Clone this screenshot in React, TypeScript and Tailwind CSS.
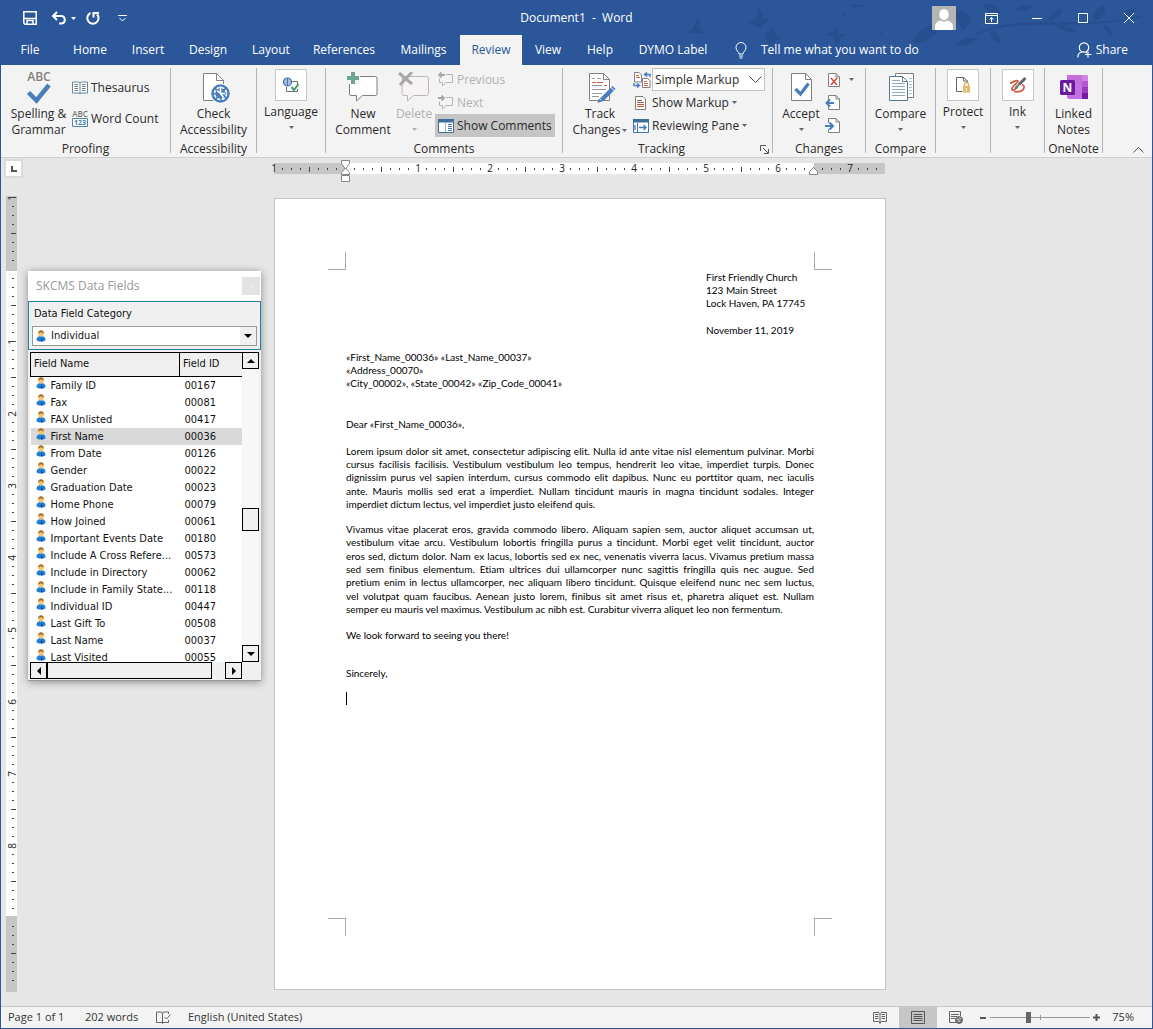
import React, { useState } from 'react';

interface Field {
  name: string;
  id: string;
}

const TABS = [
  { label: 'File', width: 'w-[58px]' },
  { label: 'Home', width: 'w-[62px]' },
  { label: 'Insert', width: 'w-[54px]' },
  { label: 'Design', width: 'w-[66px]' },
  { label: 'Layout', width: 'w-[60px]' },
  { label: 'References', width: 'w-[86px]' },
  { label: 'Mailings', width: 'w-[73px]' },
  { label: 'Review', width: 'w-[62px]' },
  { label: 'View', width: 'w-[52px]' },
  { label: 'Help', width: 'w-[52px]' },
  { label: 'DYMO Label', width: 'w-[94px]' },
];

const FIELDS: Field[] = [
  { name: 'Family ID', id: '00167' },
  { name: 'Fax', id: '00081' },
  { name: 'FAX Unlisted', id: '00417' },
  { name: 'First Name', id: '00036' },
  { name: 'From Date', id: '00126' },
  { name: 'Gender', id: '00022' },
  { name: 'Graduation Date', id: '00023' },
  { name: 'Home Phone', id: '00079' },
  { name: 'How Joined', id: '00061' },
  { name: 'Important Events Date', id: '00180' },
  { name: 'Include A Cross Refere...', id: '00573' },
  { name: 'Include in Directory', id: '00062' },
  { name: 'Include in Family State...', id: '00118' },
  { name: 'Individual ID', id: '00447' },
  { name: 'Last Gift To', id: '00508' },
  { name: 'Last Name', id: '00037' },
  { name: 'Last Visited', id: '00055' },
];

const FIRST_PARAGRAPH = [
  'Lorem ipsum dolor sit amet, consectetur adipiscing elit. Nulla id ante vitae nisl elementum pulvinar. Morbi',
  'cursus facilisis facilisis. Vestibulum vestibulum leo tempus, hendrerit leo vitae, imperdiet turpis. Donec',
  'dignissim purus vel sapien interdum, cursus commodo elit dapibus. Nunc eu porttitor quam, nec iaculis',
  'ante. Mauris mollis sed erat a imperdiet. Nullam tincidunt mauris in magna tincidunt sodales. Integer',
  'imperdiet dictum lectus, vel imperdiet justo eleifend quis.',
];

const SECOND_PARAGRAPH = [
  'Vivamus vitae placerat eros, gravida commodo libero. Aliquam sapien sem, auctor aliquet accumsan ut,',
  'vestibulum vitae arcu. Vestibulum lobortis fringilla purus a tincidunt. Morbi eget velit tincidunt, auctor',
  'eros sed, dictum dolor. Nam ex lacus, lobortis sed ex nec, venenatis viverra lacus. Vivamus pretium massa',
  'sed sem finibus elementum. Etiam ultrices dui ullamcorper nunc sagittis fringilla quis nec augue. Sed',
  'pretium enim in lectus ullamcorper, nec aliquam libero tincidunt. Quisque eleifend nunc nec sem luctus,',
  'vel volutpat quam faucibus. Aenean justo lorem, finibus sit amet risus et, pharetra aliquet est. Nullam',
  'semper eu mauris vel maximus. Vestibulum ac nibh est. Curabitur viverra aliquet leo non fermentum.',
];

/* ---------- icons ---------- */

const Caret: React.FC<{ className?: string }> = ({ className = 'text-[#666]' }) => (
  <svg width="5" height="3" viewBox="0 0 5 3" className={`shrink-0 ${className}`}>
    <path d="M0 0h5L2.5 3z" fill="currentColor" />
  </svg>
);

const SpellingIcon = () => (
  <svg width="32" height="32" viewBox="0 0 32 32" className="overflow-visible font-['Open_Sans',sans-serif]">
    <text x="16" y="9" textAnchor="middle" fontSize="12" fontWeight="600" fill="#808080">ABC</text>
    <path d="M5.500 20.500l8 8L26 13" fill="none" stroke="#4a7ebb" strokeWidth="4.500" />
  </svg>
);

const ThesaurusIcon = () => (
  <svg width="16" height="14" viewBox="0 0 16 14">
    <path d="M.5 1h6.500l1 1 1-1h6.500v11H9l-1 1-1-1H.5z" fill="#fff" stroke="#5f8aa5" />
    <path d="M8 2v11" stroke="#5f8aa5" />
    <path d="M2.500 3.500H6M2.500 5.500H6M2.500 7.500H6M2.500 9.500H6M10 3.500h3.500M10 5.500h3.500M10 7.500h3.500M10 9.500h3.500" stroke="#777" />
  </svg>
);

const WordCountIcon = () => (
  <svg width="16" height="16" viewBox="0 0 16 16" className="overflow-visible font-['Open_Sans',sans-serif]">
    <text x="8" y="6" textAnchor="middle" fontSize="8" fontWeight="600" fill="#777">ABC</text>
    <path d="M.5 7.500h15v8H.5z" fill="#fff" stroke="#4a86ad" />
    <text x="8" y="14" textAnchor="middle" fontSize="7" fontWeight="700" fill="#3f7ca6">123</text>
  </svg>
);

const AccessibilityIcon = () => (
  <svg width="32" height="32" viewBox="0 0 32 32">
    <path d="M5.500 1.500h13l7 7v20h-20z" fill="#fff" stroke="#808080" />
    <path d="M18.500 1.500v7h7" fill="none" stroke="#808080" />
    <circle cx="22.500" cy="21.500" r="10" fill="#fff" />
    <circle cx="22.500" cy="21.500" r="9.300" fill="#4a7ebb" />
    <circle cx="22.500" cy="21.500" r="6" fill="none" stroke="#fff" strokeWidth="1.600" strokeDasharray="3.100 1.610" />
    <path d="M22.500 14.500v7l3 4M22.500 21.500h4.500M22.500 21.500l-3.500-3" stroke="#fff" strokeWidth="1.600" fill="none" />
  </svg>
);

const LanguageIcon = () => (
  <svg width="16" height="16" viewBox="0 0 16 16">
    <path d="M3.500 10v4.500h11V12M9 4.500h5.500V7" fill="none" stroke="#707070" />
    <circle cx="4.500" cy="5" r="4" fill="#fff" stroke="#3f6fa8" strokeWidth="1.200" />
    <path d="M.5 5h8M4.500 1v8M1.500 3h6M1.500 7h6" stroke="#3f6fa8" strokeWidth=".9" />
    <path d="M8.500 10l2.500 3 4.500-6" fill="none" stroke="#4a9a6b" strokeWidth="2" />
  </svg>
);

const NewCommentIcon = () => (
  <svg width="32" height="32" viewBox="0 0 32 32">
    <path d="M2.500 4.500h26a1.500 1.500 0 0 1 1.500 1.500v16a1.500 1.500 0 0 1-1.500 1.500H15.500l-6 5.500v-5.500H4A1.500 1.500 0 0 1 2.500 22z" fill="#fff" stroke="#808080" />
    <path d="M0 0h13v12H0z" fill="#f3f3f3" />
    <path d="M6 0v12M0 6h12" stroke="#6aa58c" strokeWidth="4" />
  </svg>
);

const DeleteCommentIcon = () => (
  <svg width="32" height="32" viewBox="0 0 32 32">
    <path d="M4.500 4.500h24a2 2 0 0 1 2 2v15a2 2 0 0 1-2 2h-13l-6 5.500v-5.500H6a2 2 0 0 1-2-2z" fill="#f6f2f6" stroke="#b9b5b9" />
    <path d="M1 1l13 11M14 0L2 13" stroke="#a8a8a8" strokeWidth="3" />
  </svg>
);

const CommentNavIcon: React.FC<{ next?: boolean }> = ({ next }) => (
  <svg width="16" height="16" viewBox="0 0 16 16">
    <path d="M8 2.500h6.500v8H8L4.500 14v-3.500h-3v-4" fill="none" stroke="#b5b5b5" />
    {next ? (
      <path d="M0 3h6M3.500.5L6 3 3.500 5.500" fill="none" stroke="#a8a8a8" strokeWidth="1.800" />
    ) : (
      <path d="M1 3h6M3.500.5L1 3l2.500 2.500" fill="none" stroke="#a8a8a8" strokeWidth="1.800" />
    )}
  </svg>
);

const ShowCommentsIcon = () => (
  <svg width="16" height="14" viewBox="0 0 16 14">
    <path d="M.5.5h15v13H.5z" fill="#fff" stroke="#3e6d96" />
    <path d="M0 0h16v3.500H0z" fill="#3e6d96" />
    <path d="M7.500 4v9" stroke="#9ab3c8" />
    <path d="M10 5.500h4M10 7.500h4M10 9.500h4M10 11.500h4" stroke="#3e79b5" />
  </svg>
);

const TrackChangesIcon = () => (
  <svg width="32" height="32" viewBox="0 0 32 32">
    <path d="M5.500 1.500h14l6 6v21h-20z" fill="#fff" stroke="#808080" />
    <path d="M19.500 1.500v6h6" fill="none" stroke="#808080" />
    <path d="M8 6.500h3M13 6.500h4M8 13.500h10M8 17.500h14M8 21.500h10M8 24.500h7" stroke="#999" />
    <path d="M8 10.500h4M13 10.500h6M20 13.500h3" stroke="#c65f4a" strokeWidth="1.200" />
    <path d="M30 15.500L17.500 28" stroke="#4a7ebb" strokeWidth="4.500" />
    <path d="M15 26.500L13.500 31l4.500-1.500z" fill="#4a7ebb" />
    <path d="M26.500 15l4 4" stroke="#fff" />
  </svg>
);

const MarkupIcon = () => (
  <svg width="18" height="16" viewBox="0 0 18 16">
    <path d="M1.500.5H6L8.500 3v7h-7zM9.500 6.500h5l2.500 2v7H9.500z" fill="#fff" stroke="#808080" />
    <path d="M3 3.500h3M3 5.500h4M11 9.500h3M11 11.500h4M11 13.500h4" stroke="#c65f4a" />
    <path d="M17 5V2.500h-5M14 .5l-2.500 2 2.500 2M1 11v2.500h5M4 11.500l2.500 2L4 15.500" fill="none" stroke="#4a7ebb" strokeWidth="1.400" />
  </svg>
);

const ShowMarkupIcon = () => (
  <svg width="16" height="16" viewBox="0 0 16 16">
    <path d="M2.500 1.500H10L12.500 4v10.500h-10z" fill="#fff" stroke="#808080" />
    <path d="M4 5.500h5M4 7.500h7M4 9.500h7M4 11.500h7" stroke="#b5564a" />
  </svg>
);

const ReviewingPaneIcon = () => (
  <svg width="16" height="14" viewBox="0 0 16 14">
    <path d="M.5.5h15v13H.5z" fill="#fff" stroke="#3e79b5" />
    <path d="M0 0h16v3.500H0z" fill="#3e6d96" />
    <path d="M4.500 4v9" stroke="#3e79b5" />
    <path d="M6 8.500h7M10.500 6l2.500 2.500-2.500 2.500M2 6v5" fill="none" stroke="#3e79b5" strokeWidth="1.300" />
  </svg>
);

const AcceptIcon = () => (
  <svg width="32" height="32" viewBox="0 0 32 32">
    <path d="M6.500 1.500h14l6 6v21h-20z" fill="#fff" stroke="#808080" />
    <path d="M20.500 1.500v6h6" fill="none" stroke="#808080" />
    <path d="M10.500 17l5 5 8-10.500" fill="none" stroke="#4a7ebb" strokeWidth="3.200" />
  </svg>
);

const RejectIcon = () => (
  <svg width="14" height="16" viewBox="0 0 14 16">
    <path d="M1.500 1.500H9L12.500 5v9.500h-11zM9 1.500V5h3.500" fill="#fff" stroke="#808080" />
    <path d="M4 6l6 7M10 6l-6 7" stroke="#d04a35" strokeWidth="1.500" />
  </svg>
);

const ChangeNavIcon: React.FC<{ next?: boolean }> = ({ next }) => (
  <svg width="16" height="16" viewBox="0 0 16 16">
    <path d="M3.500 5V.5H11l3.500 3.500v10.500h-11V11" fill="#fff" stroke="#808080" />
    <path d="M11 .5V4h3.500" fill="none" stroke="#808080" />
    {next ? (
      <path d="M0 8h7.500M4.500 4.500L8 8l-3.500 3.500" fill="none" stroke="#4a7ebb" strokeWidth="2" />
    ) : (
      <path d="M1 8h8M5 4.500L1.500 8 5 11.500" fill="none" stroke="#4a7ebb" strokeWidth="2" />
    )}
  </svg>
);

const CompareIcon = () => (
  <svg width="32" height="32" viewBox="0 0 32 32">
    <path d="M10.500 1.500h18v24h-18z" fill="#fff" stroke="#808080" />
    <path d="M24 6.500h3M24 9.500h3M24 12.500h3M24 15.500h3M24 18.500h3M24 21.500h3" stroke="#a9bfd2" />
    <path d="M4.500 4.500h13l5 5v19h-18z" fill="#fff" stroke="#557b9c" />
    <path d="M17.500 4.500v5h5" fill="none" stroke="#557b9c" />
    <path d="M7 8.500h8M7 11.500h13M7 14.500h13M7 17.500h13M7 20.500h13M7 23.500h13" stroke="#8fa9c0" />
  </svg>
);

const ProtectIcon = () => (
  <svg width="16" height="16" viewBox="0 0 16 16">
    <path d="M7.500 14.500h-6V.5h7L12.500 4v2M8.500.5V4h4" fill="none" stroke="#666" />
    <path d="M9.500 9V7.500a2 2 0 0 1 4 0V9" fill="none" stroke="#d9b466" strokeWidth="1.400" />
    <path d="M8 9h7v6.500H8z" fill="#e3bb69" />
    <path d="M11.500 11v2.500" stroke="#fff" />
  </svg>
);

const InkIcon = () => (
  <svg width="18" height="16" viewBox="0 0 18 16">
    <path d="M1 6.500c3-2 7-3.500 8-2.500C10 5.500 2 9 3 12.500c1 2 4-1 6-2.500M5 14.500c4 1 9 0 10-3.500.4-2-.5-3-2-3.500" fill="none" stroke="#d0573f" strokeWidth="1.700" />
    <path d="M16.500 1L10 7.500" stroke="#666" strokeWidth="3" />
    <path d="M10 7.500L6 11.500" stroke="#777" strokeWidth="2" />
  </svg>
);

const OneNoteIcon = () => (
  <svg width="32" height="32" viewBox="0 0 32 32">
    <path d="M9 3h19a2 2 0 0 1 2 2v22H11a2 2 0 0 1-2-2z" fill="#c56ee0" />
    <path d="M24 3h4a2 2 0 0 1 2 2v4h-6z" fill="#cf86e6" />
    <path d="M24 9h6v6h-6z" fill="#b557d6" />
    <path d="M24 15h6v6h-6z" fill="#9a3cc2" />
    <path d="M24 21h6v6h-6z" fill="#7719aa" />
    <rect x="2" y="8" width="15" height="15" rx="1.500" fill="#6b1a9c" />
    <text x="9.500" y="20" textAnchor="middle" fontSize="12" fontWeight="700" fill="#fff" className="font-['Open_Sans',sans-serif]">N</text>
  </svg>
);

const PersonIcon = () => (
  <svg width="10" height="12" viewBox="0 0 10 12" className="shrink-0">
    <path d="M.5 9.500C.5 7.500 2 6.500 3.500 6.300h3C8 6.500 9.500 7.500 9.500 9.500c0 1.500-1.500 2-4.500 2s-4.500-.5-4.500-2z" fill="#1f80d8" />
    <path d="M5 7.500l2 3.500-2 .5z" fill="#123f7a" />
    <circle cx="5" cy="4" r="2.600" fill="#f5c46b" />
    <path d="M2.200 4C1.800 1.500 3.200.3 5 .3s3.200 1.200 2.800 3.700C7 2.800 6.500 2.500 5 2.500S3 2.800 2.200 4z" fill="#a86a1c" />
  </svg>
);

// faint birds and branches woven into the title bar
const TitleArt = () => (
  <svg width="480" height="64" viewBox="0 0 480 64" className="pointer-events-none absolute right-0 top-0" fill="#274f8f">
    <path d="M14 30c5 0 7-2 8-5l3-9c3 4 4 8 3 12l6 4c-7 1-14 1-20-2z" />
    <path d="M76 21c5-1 8-3 8-6l3-9c4 5 4 9 3 12 4-1 7 0 8 2-4 1-7 3-9 7-3-1-8-3-13-6zM92 31c5 1 6-1 8-5 3 3 4 6 3 9l7 3c-3 1-6 1-8 3l-2 5c-4-3-7-9-8-15z" />
    <path d="M155 33c5 0 7-2 9-7 3 2 4 4 3 7 4-1 7 0 8 1l-6 3-3 8c-4-3-4-5-4-8z" />
    <path d="M168 15l5-3v4zM177 3c4 2 8 0 12 1l5-2-5 4c-4 0-9 1-12-3zM205 30l4-1 1 5-3-1z" />
    <path d="M240 42c4-10 12-17 28-20-2 12-10 20-28 20zM284 45c4-7 12-9 22-8-5 6-12 9-22 8zM272 14c8-6 22-6 27 2-1 8-5 13-10 14 1-8-6-12-17-16z" />
    <path d="M294 38c24-16 52-17 82-17 34 0 62 1 94-7v2c-30 7-60 8-94 8-30 0-56 1-82 14z" />
    <path d="M312 4c8-3 14 0 17 9-8 1-14-2-17-9zM342 8c8-5 14-5 20-3-5 5-12 7-20 3zM376 20c2-8 8-12 13-12 1 6-4 11-13 12zM384 25c8-2 17 0 21 6-8 1-16-1-21-6zM422 20c-2-8 3-14 11-16 2 8-3 14-11 16zM432 24c6 1 9 5 9 12-6-2-9-6-9-12zM452 17c1-7 5-10 12-10-1 6-5 9-12 10zM318 30c7 1 11 5 11 12-7-1-11-5-11-12z" />
  </svg>
);

/* ---------- ribbon pieces ---------- */

interface BigButtonProps {
  icon: React.ReactNode;
  lines: string[];
  caret?: boolean;
  inlineCaret?: boolean;
  disabled?: boolean;
  width: string;
}

const BigButton: React.FC<BigButtonProps> = ({ icon, lines, caret, inlineCaret, disabled, width }) => (
  <button disabled={disabled} className={`flex flex-col items-center pt-1 ${width} ${disabled ? 'text-[#b1b1b1]' : ''}`}>
    <span className="mb-[2px]">{icon}</span>
    {lines.map((line, i) => (
      <span key={line} className="flex items-center gap-[2px] whitespace-nowrap leading-4">
        {line}
        {inlineCaret && i === lines.length - 1 && <Caret />}
      </span>
    ))}
    {caret && <Caret className={disabled ? 'mt-[6px] text-[#b1b1b1]' : 'mt-[6px] text-[#666]'} />}
  </button>
);

// collapsed group: boxed icon with a menu arrow under its name
const BoxButton: React.FC<{ icon: React.ReactNode; label: string }> = ({ icon, label }) => (
  <button className="flex w-full flex-col items-center pt-px">
    <span className="flex size-8 items-center justify-center border border-[#c8c8c8] bg-white">{icon}</span>
    <span className="mt-[3px] leading-4">{label}</span>
    <Caret className="mt-[6px] text-[#666]" />
  </button>
);

const SmallButton: React.FC<{ icon: React.ReactNode; label: string; caret?: boolean; disabled?: boolean }> = ({ icon, label, caret, disabled }) => (
  <button disabled={disabled} className={`flex h-[23px] items-center gap-[3px] whitespace-nowrap ${disabled ? 'text-[#b1b1b1]' : ''}`}>
    {icon}
    {label}
    {caret && <Caret />}
  </button>
);

const Group: React.FC<{ label?: string; width: string; launcher?: boolean; children: React.ReactNode }> = ({ label, width, launcher, children }) => (
  <>
    <section aria-label={label} className={`flex shrink-0 flex-col ${width}`}>
      <div className="flex flex-1 pt-[3px]">{children}</div>
      {label && (
        <div className="flex h-4 items-center justify-center">
          <span className={launcher ? 'flex-1 text-center' : ''}>{label}</span>
          {launcher && (
            <button aria-label={`${label} options`} className="mr-[3px]">
              <svg width="9" height="9" viewBox="0 0 9 9" fill="none" stroke="#555">
                <path d="M.5 6V.5H6M3 3l5 5M8.500 4v4.500H4" />
              </svg>
            </button>
          )}
        </div>
      )}
    </section>
    <div className="mb-1 mt-[3px] w-px shrink-0 bg-[#b5b5b5]" />
  </>
);

const Ribbon = () => (
  <div className="flex h-[93px] border-b border-[#cfcfcf] bg-[#f3f3f3] text-[#2a2a2a]">
    <Group label="Proofing" width="w-[169px]">
      <BigButton icon={<SpellingIcon />} lines={['Spelling &', 'Grammar']} width="w-[71px] pl-1" />
      <div className="flex flex-col gap-2 pt-2">
        <SmallButton icon={<ThesaurusIcon />} label="Thesaurus" />
        <SmallButton icon={<WordCountIcon />} label="Word Count" />
      </div>
    </Group>
    <Group label="Accessibility" width="w-[85px]">
      <BigButton icon={<AccessibilityIcon />} lines={['Check', 'Accessibility']} width="w-full" />
    </Group>
    <Group width="w-[68px]">
      <BoxButton icon={<LanguageIcon />} label="Language" />
    </Group>
    <Group label="Comments" width="w-[236px]">
      <BigButton icon={<NewCommentIcon />} lines={['New', 'Comment']} width="w-[74px]" />
      <BigButton icon={<DeleteCommentIcon />} lines={['Delete']} width="w-[28px]" caret disabled />
      <div className="ml-[7px] flex flex-col items-start">
        <div className="pl-[3px]">
          <SmallButton icon={<CommentNavIcon />} label="Previous" disabled />
          <SmallButton icon={<CommentNavIcon next />} label="Next" disabled />
        </div>
        <div className="w-[120px] bg-[#c5c5c5] pl-[3px]">
          <SmallButton icon={<ShowCommentsIcon />} label="Show Comments" />
        </div>
      </div>
    </Group>
    <Group label="Tracking" width="w-[209px]" launcher>
      <BigButton icon={<TrackChangesIcon />} lines={['Track', 'Changes']} width="w-[70px] pl-1" inlineCaret />
      <div className="flex flex-col items-start">
        <div className="flex h-[23px] items-center gap-px">
          <MarkupIcon />
          <div className="relative">
            <select aria-label="Display for review" className="h-[23px] w-[113px] appearance-none border border-[#c3c3c3] bg-white pl-[2px]">
              <option>Simple Markup</option>
            </select>
            <svg width="13" height="8" viewBox="0 0 13 8" className="pointer-events-none absolute right-[3px] top-2" fill="none" stroke="#444">
              <path d="M.5.5l6 6 6-6" />
            </svg>
          </div>
        </div>
        <SmallButton icon={<ShowMarkupIcon />} label="Show Markup" caret />
        <SmallButton icon={<ReviewingPaneIcon />} label="Reviewing Pane" caret />
      </div>
    </Group>
    <Group label="Changes" width="w-[92px]">
      <BigButton icon={<AcceptIcon />} lines={['Accept']} width="w-[52px] pl-1" caret />
      <div className="flex flex-col items-start">
        <button aria-label="Reject" className="flex h-[23px] items-center gap-2">
          <span className="ml-[2px]">
            <RejectIcon />
          </span>
          <Caret />
        </button>
        <button aria-label="Previous change" className="flex h-[23px] items-center">
          <ChangeNavIcon />
        </button>
        <button aria-label="Next change" className="flex h-[23px] items-center">
          <ChangeNavIcon next />
        </button>
      </div>
    </Group>
    <Group label="Compare" width="w-[69px]">
      <BigButton icon={<CompareIcon />} lines={['Compare']} width="w-full" caret />
    </Group>
    <Group width="w-[54px]">
      <BoxButton icon={<ProtectIcon />} label="Protect" />
    </Group>
    <Group width="w-[53px]">
      <BoxButton icon={<InkIcon />} label="Ink" />
    </Group>
    <Group label="OneNote" width="w-[57px]">
      <BigButton icon={<OneNoteIcon />} lines={['Linked', 'Notes']} width="w-full" />
    </Group>
    <button aria-label="Collapse the ribbon" className="mb-1 ml-auto mr-2 self-end">
      <svg width="11" height="6" viewBox="0 0 11 6" fill="none" stroke="#555">
        <path d="M.5 5.500l5-5 5 5" />
      </svg>
    </button>
  </div>
);

/* ---------- title bar and tabs ---------- */

const Header = () => {
  const [active, setActive] = useState('Review');

  return (
    <header className="relative bg-[#2b579a] text-white">
      <TitleArt />
      <div className="relative grid h-[34px] grid-cols-[1fr_auto_1fr] items-center">
        <div className="flex items-center pl-[22px]">
          <button aria-label="Save">
            <svg width="14" height="14" viewBox="0 0 14 14" fill="none" stroke="#fff" strokeWidth="1.500">
              <path d="M.8.800h12.400v12.400H2L.8 12zM1 7.500h12M4 13v-3.500h6V13" />
            </svg>
          </button>
          <button aria-label="Undo" className="ml-[14px] flex items-center gap-1">
            <svg width="16" height="14" viewBox="0 0 16 14" fill="none" stroke="#fff" strokeWidth="2">
              <path d="M6 1L2 5l4 4M2.500 5H10c5 0 5 7.500 0 7.500H8" />
            </svg>
            <Caret className="text-white" />
          </button>
          <button aria-label="Redo" className="ml-[10px]">
            <svg width="14" height="14" viewBox="0 0 14 14" fill="none" stroke="#fff" strokeWidth="2">
              <path d="M4.500 2A5.600 5.600 0 1 0 11 3.200M7.500 6.500V2H13" />
            </svg>
          </button>
          <button aria-label="Customize Quick Access Toolbar" className="ml-[18px]">
            <svg width="9" height="7" viewBox="0 0 9 7" fill="none" stroke="#fff">
              <path d="M0 .5h9M1.500 3l3 3 3-3" />
            </svg>
          </button>
        </div>
        <h1>Document1&nbsp; -&nbsp; Word</h1>
        <div className="flex items-center justify-end">
          <button aria-label="Account" className="mr-3 size-6 bg-[#b5b5b5]">
            <svg width="24" height="24" viewBox="0 0 24 24" fill="#fff">
              <ellipse cx="12" cy="8.500" rx="4.700" ry="5.500" />
              <path d="M3 24v-3c0-4 2.500-6 6-6.500 1.500 1.500 4.500 1.500 6 0 3.500.5 6 2.500 6 6.500v3z" />
            </svg>
          </button>
          <button aria-label="Ribbon display options" className="flex w-[46px] justify-center">
            <svg width="13" height="11" viewBox="0 0 13 11" fill="none" stroke="#fff">
              <path d="M.5.5h12v10H.5zM.5 2.500h12M6.500 9V4.500M4.500 6.500l2-2 2 2" />
            </svg>
          </button>
          <button aria-label="Minimize" className="flex w-[46px] justify-center">
            <svg width="10" height="1" viewBox="0 0 10 1">
              <path d="M0 0h10v1H0z" fill="#fff" />
            </svg>
          </button>
          <button aria-label="Maximize" className="flex w-[46px] justify-center">
            <svg width="10" height="10" viewBox="0 0 10 10" fill="none" stroke="#fff">
              <path d="M.5.5h9v9h-9z" />
            </svg>
          </button>
          <button aria-label="Close" className="flex w-[46px] justify-center">
            <svg width="10" height="10" viewBox="0 0 10 10" stroke="#fff">
              <path d="M0 0l10 10M10 0L0 10" />
            </svg>
          </button>
        </div>
      </div>
      <nav className="relative flex h-[30px]">
        {TABS.map(tab => (
          <button
            key={tab.label}
            onClick={() => setActive(tab.label)}
            className={`shrink-0 whitespace-nowrap ${tab.width} ${active === tab.label ? 'bg-[#f3f3f3] text-[#2b579a]' : ''}`}
          >
            {tab.label}
          </button>
        ))}
        <button className="ml-[15px] flex items-center gap-[14px] whitespace-nowrap">
          <svg width="12" height="17" viewBox="0 0 12 17" fill="none" stroke="#fff">
            <path d="M4 12C4 9.500 1 9 1 5.500a5 5 0 0 1 10 0C11 9 8 9.500 8 12zM4 14h4M4.500 16h3" />
          </svg>
          Tell me what you want to do
        </button>
        <button className="ml-auto mr-6 flex items-center gap-1">
          <svg width="15" height="16" viewBox="0 0 15 16" fill="none" stroke="#fff" strokeWidth="1.200">
            <circle cx="7" cy="5.500" r="4.700" />
            <path d="M.8 15.500c0-3 1.700-5 4-5.500M9 10l1 1M11 9.500v6M8 12.500h6.500" />
          </svg>
          Share
        </button>
      </nav>
    </header>
  );
};

/* ---------- rulers: 72px to the inch, a mark every eighth ---------- */

const HorizontalRuler = () => (
  <svg width="612" height="22" viewBox="0 0 612 22" className="overflow-visible font-['Open_Sans',sans-serif]">
    <path d="M0 3h611v11H0z" fill="#c6c6c6" />
    <path d="M72 3h468v11H72z" fill="#fff" />
    {Array.from({ length: 68 }, (_, k) => {
      const x = k * 9;
      if (k === 8) return null;
      if (k % 8 === 0) {
        return (
          <text key={k} x={x} y="12" textAnchor="middle" fontSize="10" fill="#222">
            {Math.abs(k - 8) / 8}
          </text>
        );
      }
      return k % 8 === 4 ? (
        <path key={k} d={`M${x - 0.5} 7v5`} stroke="#444" />
      ) : (
        <path key={k} d={`M${x - 0.5} 8v2`} stroke="#444" />
      );
    })}
    <path d="M67.500.5h8v3L71.500 9l-4-5.500zM67.500 14.500v-2L71.500 8l4 4.500v2zM67.500 15.500h8v6h-8z" fill="#fff" stroke="#888" />
    <path d="M535.500 14.500v-3l4-4 4 4v3z" fill="#fff" stroke="#888" />
  </svg>
);

const VerticalRuler = () => (
  <svg width="11" height="796" viewBox="0 0 11 796" className="overflow-visible font-['Open_Sans',sans-serif]">
    <path d="M0 0h11v796H0z" fill="#c6c6c6" />
    <path d="M0 75h11v645H0z" fill="#fff" />
    {Array.from({ length: 88 }, (_, k) => {
      const y = k * 9 + 2;
      if (k === 8 || k === 80) return null;
      if (k % 8 === 0) {
        return (
          <text key={k} textAnchor="middle" fontSize="10" fill="#222" transform={`translate(10 ${y}) rotate(-90)`}>
            {Math.abs(k - 8) / 8}
          </text>
        );
      }
      return k % 8 === 4 ? (
        <path key={k} d={`M5 ${y - 0.5}h5`} stroke="#444" />
      ) : (
        <path key={k} d={`M6 ${y - 0.5}h2`} stroke="#444" />
      );
    })}
  </svg>
);

/* ---------- document ---------- */

const Paragraph: React.FC<{ lines: string[]; className: string }> = ({ lines, className }) => (
  <p className={`grid auto-rows-fr items-center ${className}`}>
    {lines.map((line, i) => (
      <span key={line} className={`whitespace-nowrap leading-3 ${i < lines.length - 1 ? '[text-align-last:justify]' : ''}`}>
        {line}
      </span>
    ))}
  </p>
);

const Page = () => (
  <article className="flex h-[792px] w-[612px] flex-col border border-[#c6c6c6] bg-white py-[53px] font-[Lato,Carlito,sans-serif] text-[10px] text-black [font-variant-ligatures:none]">
    <div className="flex justify-between px-[53px]">
      <span className="size-[18px] border-b border-r border-[#a8a8a8]" />
      <span className="size-[18px] border-b border-l border-[#a8a8a8]" />
    </div>
    <div className="px-[71px]">
      <address className="ml-[360px] grid h-[67px] grid-rows-5 items-center whitespace-nowrap not-italic leading-3">
        <span>First Friendly Church</span>
        <span>123 Main Street</span>
        <span>Lock Haven, PA 17745</span>
        <span className="row-start-5">November 11, 2019</span>
      </address>
      <div className="mt-[13px] grid h-10 grid-rows-3 items-center leading-3">
        <span>«First_Name_00036» «Last_Name_00037»</span>
        <span>«Address_00070»</span>
        <span>«City_00002», «State_00042» «Zip_Code_00041»</span>
      </div>
      <p className="mt-7 leading-[13px]">Dear «First_Name_00036»,</p>
      <Paragraph lines={FIRST_PARAGRAPH} className="mt-[13px] h-[67px]" />
      <Paragraph lines={SECOND_PARAGRAPH} className="mt-[11px] h-[94px]" />
      <p className="mt-[13px] leading-[13px]">We look forward to seeing you there!</p>
      <p className="mt-[25px] leading-[13px]">Sincerely,</p>
      <div className="mt-3 h-[13px] w-px bg-black" />
    </div>
    <div className="mt-auto flex justify-between px-[53px]">
      <span className="size-[18px] border-r border-t border-[#a8a8a8]" />
      <span className="size-[18px] border-l border-t border-[#a8a8a8]" />
    </div>
  </article>
);

/* ---------- floating field list ---------- */

const Arrow: React.FC<{ d: string }> = ({ d }) => (
  <svg width="10" height="10" viewBox="0 0 10 10">
    <path d={d} fill="#000" />
  </svg>
);

const SCROLL_BUTTON = 'flex size-[17px] shrink-0 items-center justify-center border border-black bg-[#f0f0f0]';

const DataFieldsPanel = () => {
  const [selected, setSelected] = useState('00036');

  return (
    <aside className="absolute left-[27px] top-[113px] w-[233px] bg-[#f0f0f0] font-['DejaVu_Sans_Condensed','DejaVu_Sans',sans-serif] text-[11px] text-[#111] shadow-[0_1px_8px_rgba(0,0,0,0.4)]">
      <div className="flex h-[30px] items-center justify-between bg-white pl-2 font-['Open_Sans',sans-serif] text-xs text-[#999]">
        <span>SKCMS Data Fields</span>
        <button aria-label="Close panel" className="mr-px h-[18px] w-[18px] bg-[#e3e3e3] text-[8px] text-[#eee]">x</button>
      </div>
      <div className="border border-[#2a7fa5] px-[3px] pb-[3px]">
        <label htmlFor="category" className="block h-6 pl-[2px] leading-6">Data Field Category</label>
        <div className="relative">
          <select id="category" className="block h-5 w-full appearance-none border border-[#999] bg-white pl-[18px]">
            <option>Individual</option>
          </select>
          <span className="pointer-events-none absolute left-1 top-1">
            <PersonIcon />
          </span>
          <span className="pointer-events-none absolute right-px top-px flex h-[18px] w-4 items-center justify-center bg-[#f0f0f0]">
            <Arrow d="M1 3h8L5 7z" />
          </span>
        </div>
      </div>
      <div className="mt-[2px] border-b border-[#999] px-[2px] pb-px">
        <div className="flex h-[310px]">
          <div className="h-[310px] flex-1 overflow-hidden bg-white">
            <table className="w-full table-fixed border-collapse text-left">
              <thead>
                <tr className="h-6 bg-[#efefef]">
                  <th className="w-[149px] border border-black pl-[3px] font-normal">Field Name</th>
                  <th className="border-y border-black pl-[3px] font-normal">Field ID</th>
                </tr>
              </thead>
              <tbody>
                {FIELDS.map(field => (
                  <tr
                    key={field.id}
                    onClick={() => setSelected(field.id)}
                    className={`h-[17px] leading-[17px] ${selected === field.id ? 'bg-[#d9d9d9]' : ''}`}
                  >
                    <td className="p-0 pl-[5px]">
                      <span className="flex items-start gap-[5px] whitespace-nowrap">
                        <PersonIcon />
                        {field.name}
                      </span>
                    </td>
                    <td className="p-0 pl-[5px]">{field.id}</td>
                  </tr>
                ))}
              </tbody>
            </table>
          </div>
          <div className="flex w-[17px] flex-col bg-[#f7f7f7]">
            <button aria-label="Scroll up" className={SCROLL_BUTTON}>
              <Arrow d="M1 7h8L5 3z" />
            </button>
            <div className="mt-[139px] h-[23px] border border-black bg-[#f0f0f0]" />
            <button aria-label="Scroll down" className={`mt-auto ${SCROLL_BUTTON}`}>
              <Arrow d="M1 3h8L5 7z" />
            </button>
          </div>
        </div>
        <div className="flex h-[17px] pr-[17px]">
          <button aria-label="Scroll left" className={SCROLL_BUTTON}>
            <Arrow d="M7 1v8L3 5z" />
          </button>
          <div className="w-[165px] border border-black bg-[#f0f0f0]" />
          <button aria-label="Scroll right" className={`ml-auto ${SCROLL_BUTTON}`}>
            <Arrow d="M3 1v8l4-4z" />
          </button>
        </div>
      </div>
    </aside>
  );
};

/* ---------- status bar ---------- */

const StatusBar = () => {
  const [zoom, setZoom] = useState(38);

  return (
    <footer className="flex h-[22px] items-center border-t border-[#c6c6c6] bg-[#f3f3f3] text-[11px] text-[#333]">
      <span className="w-[84px] whitespace-nowrap pl-[7px]">Page 1 of 1</span>
      <span className="w-[71px] whitespace-nowrap">202 words</span>
      <button aria-label="Proofing errors" className="w-8">
        <svg width="15" height="13" viewBox="0 0 15 13" fill="none" stroke="#666">
          <path d="M6.500 2v10.500M6.500 2L5.500 1h-5v10.500H6l.5 1 .5-1h5.500V9M6.500 2l1-1h5v2M8.500 6l2 2 4-4.500" />
        </svg>
      </button>
      <span className="whitespace-nowrap">English (United States)</span>
      <div className="ml-auto flex h-full items-center">
        <button aria-label="Read mode" className="flex h-full w-[38px] items-center justify-center">
          <svg width="14" height="13" viewBox="0 0 14 13" fill="none" stroke="#666">
            <path d="M.5 1.500H6l1 1 1-1h5.500v9H8l-1 2-1-2H.5zM7 2v10M2 3.500h3.500M2 5.500h3.500M2 7.500h3.500M8.500 3.500H12M8.500 5.500H12M8.500 7.500H12" />
          </svg>
        </button>
        <button aria-label="Print layout" className="flex h-full w-[38px] items-center justify-center bg-[#c6c6c6]">
          <svg width="14" height="13" viewBox="0 0 14 13" fill="none" stroke="#555">
            <path d="M.5.5h13v12H.5zM2.500 3.500h9M2.500 5.500h9M2.500 7.500h9M2.500 9.500h9" />
          </svg>
        </button>
        <button aria-label="Web layout" className="flex h-full w-[38px] items-center justify-center">
          <svg width="14" height="13" viewBox="0 0 14 13" fill="none" stroke="#666">
            <path d="M7 11.500H.5V.5h11V5M2 3.500h8M2 5.500h6M2 7.500h4" />
            <circle cx="10" cy="9" r="3.500" fill="#777" />
            <path d="M8 8l2 1v2M10 6.500l2 1.500" stroke="#ddd" />
          </svg>
        </button>
        <button aria-label="Zoom out" className="ml-[5px] h-[2px] w-[6px] bg-[#555]" />
        <div className="relative ml-1 flex h-full items-center">
          <span className="absolute left-1/2 top-2 h-[5px] w-px bg-[#999]" />
          <input
            type="range"
            aria-label="Zoom"
            value={zoom}
            onChange={e => setZoom(Number(e.target.value))}
            className="relative h-px w-[100px] appearance-none bg-[#999] [&::-webkit-slider-thumb]:h-[11px] [&::-webkit-slider-thumb]:w-[5px] [&::-webkit-slider-thumb]:appearance-none [&::-webkit-slider-thumb]:bg-[#666]"
          />
        </div>
        <button aria-label="Zoom in" className="ml-[3px]">
          <svg width="7" height="7" viewBox="0 0 7 7" stroke="#555" strokeWidth="2">
            <path d="M3.500 0v7M0 3.500h7" />
          </svg>
        </button>
        <span className="ml-3 mr-[18px]">75%</span>
      </div>
    </footer>
  );
};

const App: React.FC = () => (
  <div className="flex min-h-screen flex-col border border-[#2b579a] bg-[#e6e6e6] font-['Open_Sans',sans-serif] text-xs">
    <Header />
    <Ribbon />
    <main className="relative flex flex-1">
      <div className="flex w-6 shrink-0 flex-col items-start gap-5 pl-[5px] pt-[3px]">
        <button aria-label="Left tab stop" className="flex size-[15px] items-center justify-center bg-white outline-2 outline-[#dadada]">
          <svg width="6" height="6" viewBox="0 0 6 6" fill="none" stroke="#555" strokeWidth="2">
            <path d="M1 0v5h5" />
          </svg>
        </button>
        <VerticalRuler />
      </div>
      <div className="flex flex-1 flex-col items-center gap-4 pb-4 pr-[17px] pt-[2px]">
        <HorizontalRuler />
        <Page />
      </div>
      <DataFieldsPanel />
    </main>
    <StatusBar />
  </div>
);

export default App;
